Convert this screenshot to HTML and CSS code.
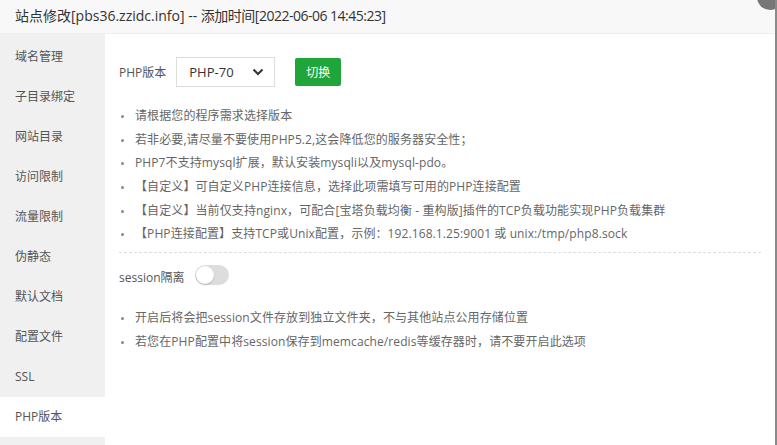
FILE: index.html
```html
<!DOCTYPE html>
<html lang="zh-CN">
<head>
    <meta charset="UTF-8">
    <title>站点修改</title>
    <link rel="stylesheet" href="styles.css">
</head>
<body>

<div class="layer">
    <div class="layer-title">站点修改[pbs36.zzidc.info] -- <span class="time">添加时间[2022-06-06 14:45:23]</span></div>
    <span class="layer-close"></span>

    <div class="layer-body">
        <ul class="side-menu">
            <li>域名管理</li>
            <li>子目录绑定</li>
            <li>网站目录</li>
            <li>访问限制</li>
            <li>流量限制</li>
            <li>伪静态</li>
            <li>默认文档</li>
            <li>配置文件</li>
            <li>SSL</li>
            <li class="active">PHP版本</li>
            <li></li>
        </ul>

        <div class="tab-con">
            <div class="line">
                <span class="tname">PHP版本</span>
                <div class="select-box">
                    <span>PHP-70</span>
                    <svg width="12" height="8" viewBox="0 0 12 8"><path d="M1.5 1.5 L6 6 L10.5 1.5" fill="none" stroke="#333" stroke-width="2"/></svg>
                </div>
                <button class="btn-green">切换</button>
            </div>

            <ul class="help">
                <li>请根据您的程序需求选择版本</li>
                <li>若非必要,请尽量不要使用PHP5.2,这会降低您的服务器安全性；</li>
                <li>PHP7不支持mysql扩展，默认安装mysqli以及mysql-pdo。</li>
                <li>【自定义】可自定义PHP连接信息，选择此项需填写可用的PHP连接配置</li>
                <li>【自定义】当前仅支持nginx，可配合[宝塔负载均衡 - 重构版]插件的TCP负载功能实现PHP负载集群</li>
                <li>【PHP连接配置】支持TCP或Unix配置，示例：192.168.1.25:9001 或 unix:/tmp/php8.sock</li>
            </ul>

            <div class="divider"></div>

            <div class="line session">
                <span class="tname">session隔离</span>
                <span class="switch"><span class="knob"></span></span>
            </div>

            <ul class="help">
                <li>开启后将会把session文件存放到独立文件夹，不与其他站点公用存储位置</li>
                <li>若您在PHP配置中将session保存到memcache/redis等缓存器时，请不要开启此选项</li>
            </ul>
        </div>
    </div>
</div>

</body>
</html>
```

FILE: styles.css
```css
body {
    margin: 0;
    padding: 0;
    background: #fff;
    font-family: "Open Sans", "Noto Sans CJK SC", sans-serif;
    color: #555;
    width: 777px;
    height: 445px;
    overflow: hidden;
}

.layer {
    position: relative;
    height: 445px;
    border-right: 2px solid #8a8a8a;
    box-sizing: border-box;
    overflow: hidden;
}

.layer-title {
    height: 33px;
    line-height: 31px;
    padding-left: 15px;
    background-color: #f8f8f8;
    border-bottom: 1px solid #eee;
    font-size: 14px;
    color: #333;
}

.layer-title .time {
    letter-spacing: -0.5px;
}

.layer-close {
    position: absolute;
    top: -16px;
    right: -8px;
    width: 26px;
    height: 26px;
    border-radius: 50%;
    background: #777;
}

.layer-body {
    display: flex;
    height: 411px;
}

.side-menu {
    list-style: none;
    margin: 0;
    padding: 3px 0 0 0;
    width: 105px;
    background-color: #f0f0f0;
    flex-shrink: 0;
}

.side-menu li {
    height: 40px;
    line-height: 40px;
    padding-left: 15px;
    font-size: 12px;
    color: #555;
}

.side-menu li.active {
    background-color: #fff;
}

.tab-con {
    flex: 1;
    padding: 23px 14px 0 14px;
}

.line {
    display: flex;
    align-items: center;
    font-size: 12px;
}

.tname {
    color: #555;
    margin-right: 10px;
}

.select-box {
    width: 99px;
    height: 30px;
    box-sizing: border-box;
    border: 1px solid #ddd;
    display: flex;
    align-items: center;
    justify-content: space-between;
    padding: 0 10px 0 12px;
    font-size: 13px;
    color: #333;
}

.btn-green {
    margin-left: 20px;
    width: 46px;
    height: 28px;
    border: none;
    border-radius: 2px;
    background-color: #20a53a;
    color: #fff;
    font-size: 12px;
    font-family: inherit;
}

.help {
    list-style: none;
    margin: 17px 0 0 0;
    padding: 0;
}

.help li {
    position: relative;
    height: 23.7px;
    line-height: 23.7px;
    padding-left: 16px;
    font-size: 12px;
    color: #666;
    white-space: nowrap;
    letter-spacing: 0.1px;
}

.help li::before {
    content: "";
    position: absolute;
    left: 2px;
    top: 11px;
    width: 3px;
    height: 3px;
    border-radius: 50%;
    background: #888;
}

.divider {
    margin-top: 6px;
    border-top: 1px dashed #ddd;
}

.session {
    margin-top: 12px;
    height: 20px;
}

.session .tname {
    margin-right: 10px;
    margin-top: 4px;
}

.switch {
    position: relative;
    width: 34px;
    height: 20px;
    border-radius: 10px;
    background: #ddd;
}

.knob {
    position: absolute;
    left: 1px;
    top: 1px;
    width: 18px;
    height: 18px;
    border-radius: 50%;
    background: #fff;
    box-shadow: 0 1px 2px rgba(0, 0, 0, 0.2);
}

.session + .help {
    margin-top: 21px;
}
```
